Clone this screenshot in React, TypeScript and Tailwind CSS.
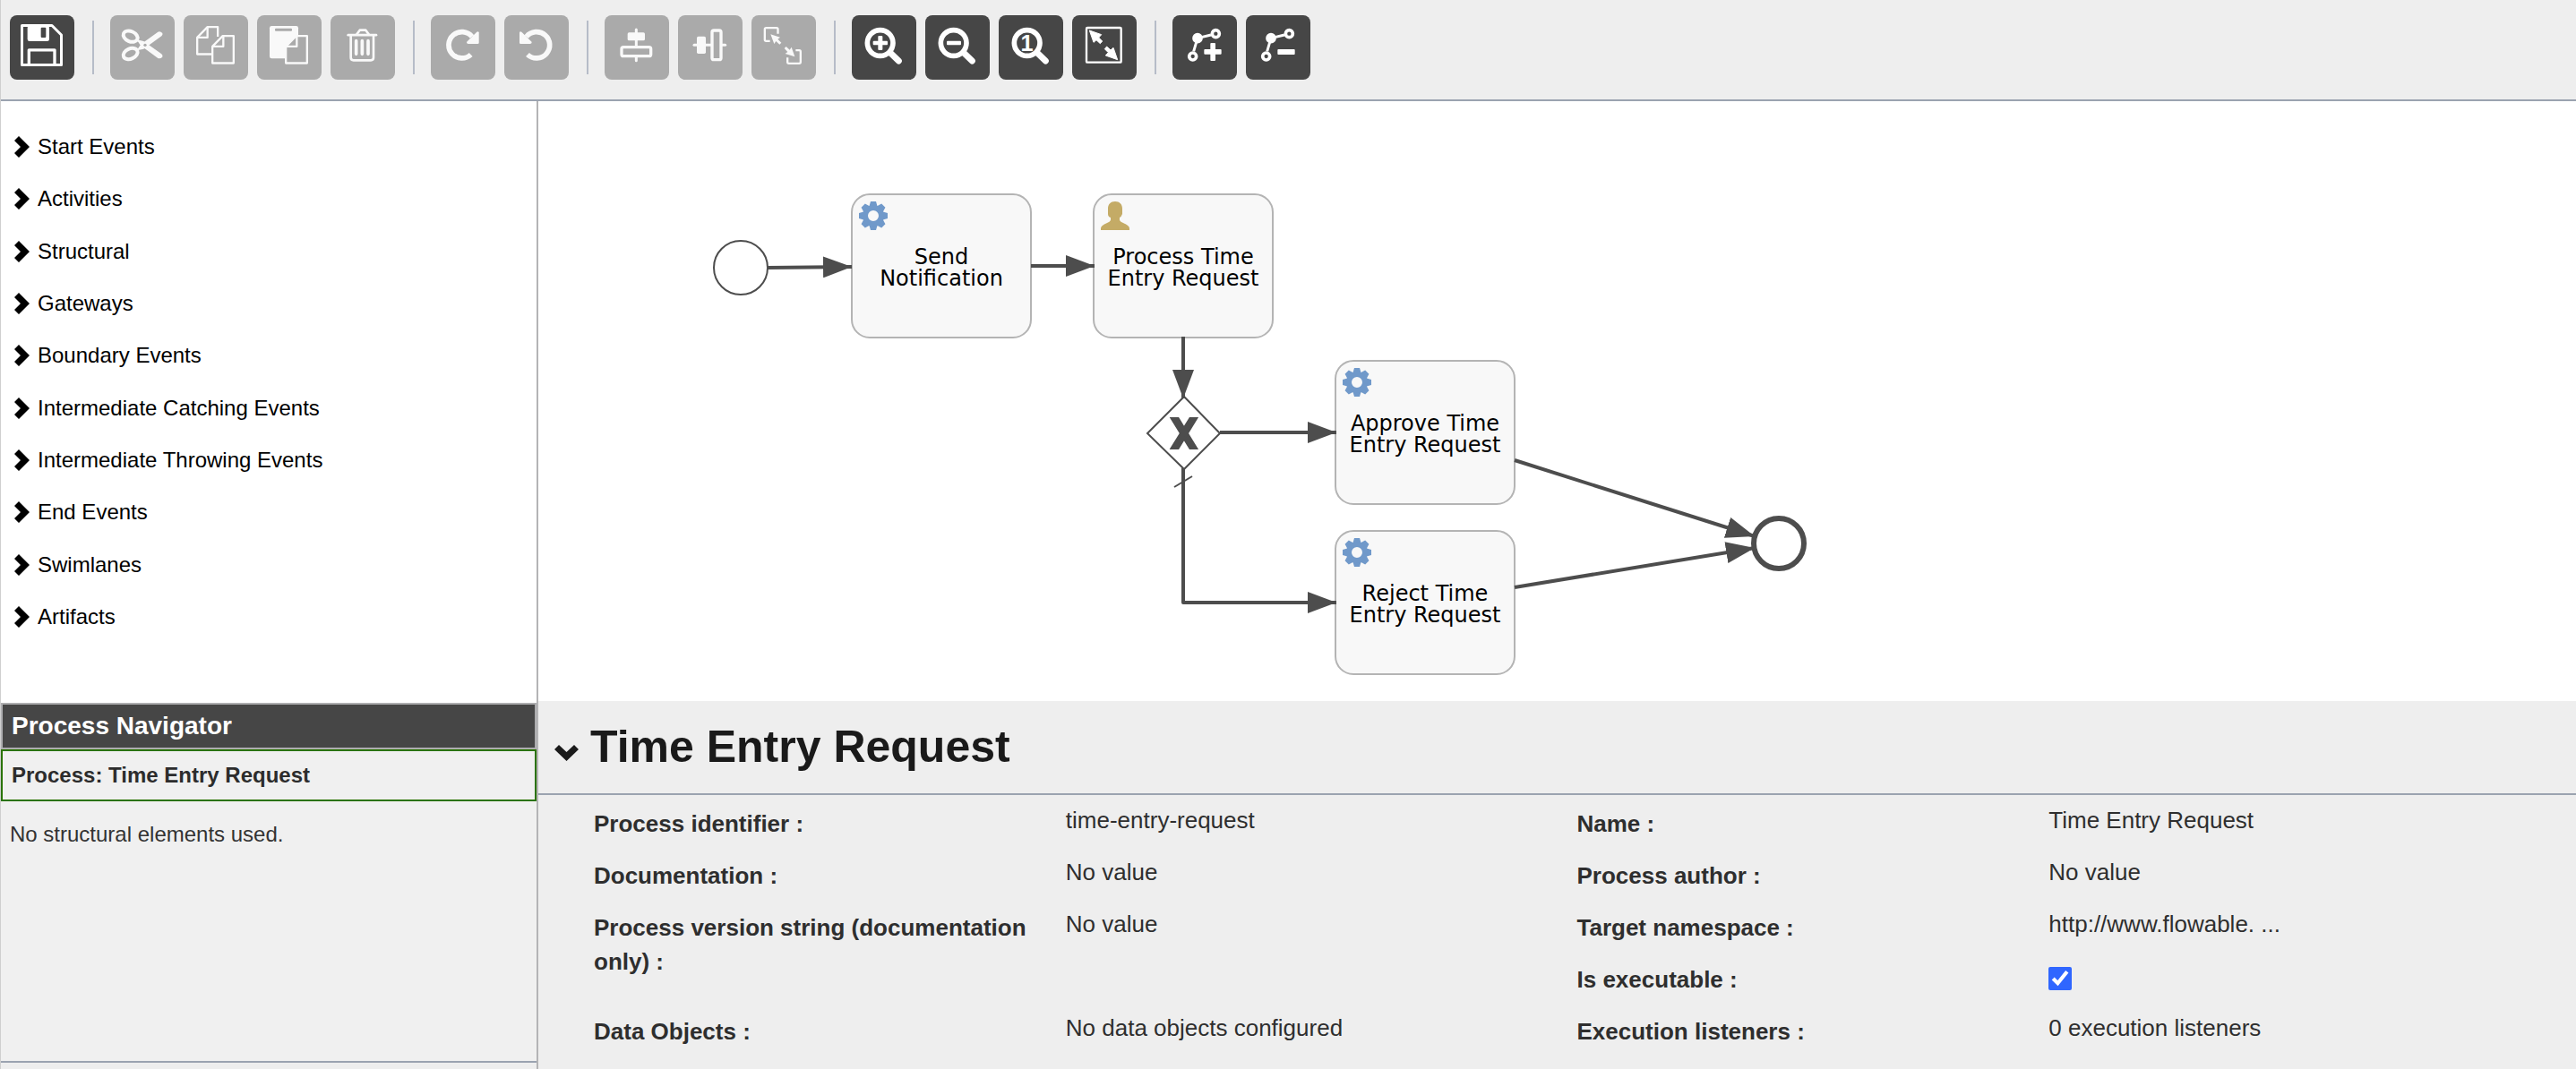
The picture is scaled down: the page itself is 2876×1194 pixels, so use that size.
import type { ReactNode } from "react";

const DARK = "#464646";
const GREY = "#aaaaaa";
const INK = "#4d4d4d";

/* ---------- toolbar icons, drawn on a 216 unit grid ---------- */

const DOC = "M96.5 104.5 L131 69.5 H167.5 V160.5 H96.5 Z";

const ARROW = "M58 51 L98 65 L89 75 L101 87 L94 95 L81 83 L72 91 Z";

function Scissors() {
  return (
    <>
      <g fill="none" stroke="currentColor" strokeWidth="12">
        <ellipse cx="68" cy="71" rx="25" ry="17" transform="rotate(24 68 71)" />
        <ellipse cx="68" cy="129" rx="25" ry="17" transform="rotate(-24 68 129)" />
      </g>
      <path d="M90 84 L112 91 L160 56 Q168 53 175 60 Q177 66 172 70 L112 113 L90 118 L102 101 Z" />
      <path d="M90 116 L112 109 L160 144 Q168 147 175 140 Q177 134 172 130 L112 87 L90 82 L102 99 Z" />
      <circle cx="117" cy="100" r="5" fill={GREY} />
    </>
  );
}

function Turn() {
  return (
    <>
      <path d="M138 72 A44 44 0 1 0 134 132" fill="none" stroke="currentColor" strokeWidth="17" />
      <path d="M161 58 V92 Q161 96 157 96 H125 Q117 94 122 88 L154 56 Q159 52 161 58 Z" />
    </>
  );
}

function Lens({ children }: { children: ReactNode }) {
  return (
    <>
      <circle cx="95" cy="93" r="43" fill="none" stroke="currentColor" strokeWidth="17" />
      <path d="M129 126 L157 153" stroke="currentColor" strokeWidth="21" strokeLinecap="round" />
      {children}
    </>
  );
}

function Bend() {
  return (
    <g stroke="currentColor" strokeWidth="11" fill="none">
      <path d="M129 66 L84 77 L71 121" strokeWidth="9" />
      <circle cx="84" cy="77" r="12" fill="currentColor" />
      <circle cx="145" cy="62" r="12" />
      <circle cx="68" cy="138" r="12" />
    </g>
  );
}

type Tool = { label: string; dark?: boolean; icon: ReactNode };

const toolGroups: Tool[][] = [
  [
    {
      label: "Save",
      dark: true,
      icon: (
        <>
          <path d="M40.5 34.5 H141 L172.5 66 V166.5 H40.5 Z" fill="none" stroke="currentColor" strokeWidth="9" strokeLinejoin="round" />
          <rect x="59" y="35" width="73" height="52" rx="7" />
          <rect x="104" y="41" width="17" height="34" rx="3" fill={DARK} />
          <path d="M64 166 V116.5 H150 V166" fill="none" stroke="currentColor" strokeWidth="10" strokeLinejoin="round" />
        </>
      ),
    },
  ],
  [
    { label: "Cut", icon: <Scissors /> },
    {
      label: "Copy",
      icon: (
        <g fill="none" stroke="currentColor" strokeWidth="7" strokeLinejoin="round">
          <path d="M96 130.5 H45.5 V74.5 L80 39.5 H114.5 V72" />
          <path d="M45.5 74.5 H80 V39.5" />
          <path d={DOC} />
          <path d="M96.5 104.5 H133 V69.5" />
        </g>
      ),
    },
    {
      label: "Paste",
      icon: (
        <>
          <rect x="42" y="36" width="96" height="109" rx="7" />
          <rect x="60" y="44" width="57" height="9" rx="3" fill={GREY} />
          <g stroke="currentColor" strokeWidth="7" strokeLinejoin="round" fill={GREY}>
            <path d={DOC} />
            <path d="M96.5 104.5 H133 V69.5" fill="none" />
          </g>
        </>
      ),
    },
    {
      label: "Delete",
      icon: (
        <g fill="none" stroke="currentColor" strokeWidth="8" strokeLinecap="round" strokeLinejoin="round">
          <path d="M59 66.5 H153" />
          <path d="M88 64 L98 50 H118 L128 64" />
          <path d="M68 70 V142 Q68 151 77 151 H135 Q144 151 144 142 V70" />
          <path d="M86 86 V130 M106 86 V130 M126 86 V130" strokeWidth="11" />
        </g>
      ),
    },
  ],
  [
    { label: "Redo", icon: <Turn /> },
    {
      label: "Undo",
      icon: (
        <g transform="translate(212 0) scale(-1 1)">
          <Turn />
        </g>
      ),
    },
  ],
  [
    {
      label: "Align vertical",
      icon: (
        <>
          <path d="M106 48 V152" stroke="currentColor" strokeWidth="9" strokeLinecap="round" />
          <rect x="77" y="58" width="58" height="27" rx="5" />
          <rect x="57" y="107" width="98" height="30" rx="6" fill={GREY} stroke="currentColor" strokeWidth="10" />
        </>
      ),
    },
    {
      label: "Align horizontal",
      icon: (
        <>
          <path d="M54 100 H158" stroke="currentColor" strokeWidth="9" strokeLinecap="round" />
          <rect x="63" y="71" width="30" height="58" rx="5" />
          <rect x="114" y="51" width="30" height="98" rx="6" fill={GREY} stroke="currentColor" strokeWidth="10" />
        </>
      ),
    },
    {
      label: "Same size",
      icon: (
        <>
          <g fill="none" stroke="currentColor" strokeWidth="7">
            <path d="M62 86.5 H49 Q44.5 86.5 44.5 82 V47 Q44.5 42.5 49 42.5 H84 Q88.5 42.5 88.5 47 V62" />
            <path d="M148 117.5 H160 Q164.5 117.5 164.5 122 V157 Q164.5 161.5 160 161.5 H125 Q120.5 161.5 120.5 157 V142" />
          </g>
          <path d="M64 64 L96 74 L88 80 L100 92 L94 98 L82 87 L76 96 Z" />
          <path d="M145 139 L113 129 L121 123 L110 111 L116 105 L128 116 L134 107 Z" />
        </>
      ),
    },
  ],
  [
    {
      label: "Zoom in",
      dark: true,
      icon: (
        <Lens>
          <rect x="71" y="86" width="49" height="14" rx="3" />
          <rect x="88" y="69" width="15" height="48" rx="3" />
        </Lens>
      ),
    },
    {
      label: "Zoom out",
      dark: true,
      icon: (
        <Lens>
          <rect x="72" y="86" width="48" height="14" rx="3" />
        </Lens>
      ),
    },
    {
      label: "Zoom to actual size",
      dark: true,
      icon: (
        <Lens>
          <text x="95" y="120" textAnchor="middle" fontSize="76" fontWeight="700">
            1
          </text>
        </Lens>
      ),
    },
    {
      label: "Zoom to fit",
      dark: true,
      icon: (
        <>
          <rect x="48" y="42" width="116" height="116" rx="3" fill="none" stroke="currentColor" strokeWidth="7" />
          <path d={ARROW} strokeLinejoin="round" stroke="currentColor" strokeWidth="3" />
          <path d={ARROW} transform="rotate(180 105 100)" strokeLinejoin="round" stroke="currentColor" strokeWidth="3" />
        </>
      ),
    },
  ],
  [
    {
      label: "Add bend point",
      dark: true,
      icon: (
        <>
          <Bend />
          <rect x="106" y="114" width="58" height="17" rx="3" />
          <rect x="127" y="93" width="17" height="60" rx="3" />
        </>
      ),
    },
    {
      label: "Remove bend point",
      dark: true,
      icon: (
        <>
          <Bend />
          <rect x="106" y="114" width="58" height="18" rx="3" />
        </>
      ),
    },
  ],
];

function Toolbar() {
  return (
    <header className="flex items-center border-b-2 border-[#9ba3b0] bg-[#eeeeee] pt-[17px] pb-[22px] pl-[10px]">
      {toolGroups.map((group, i) => (
        <div key={i} className="flex items-center">
          {i > 0 && <div className="mr-[18px] ml-5 h-[60px] w-0.5 bg-[#b6bcc8]" />}
          <div className="flex gap-[10px]">
            {group.map((tool) => (
              <button
                key={tool.label}
                type="button"
                aria-label={tool.label}
                disabled={!tool.dark}
                className={
                  tool.dark
                    ? "size-[72px] rounded-lg bg-[#464646] text-white"
                    : "size-[72px] rounded-lg bg-[#aaaaaa] text-[#f9f9f9]"
                }
              >
                <svg viewBox="0 0 216 216" className="size-full" fill="currentColor" aria-hidden="true">
                  {tool.icon}
                </svg>
              </button>
            ))}
          </div>
        </div>
      ))}
    </header>
  );
}

/* ---------- sidebar ---------- */

const palette = [
  "Start Events",
  "Activities",
  "Structural",
  "Gateways",
  "Boundary Events",
  "Intermediate Catching Events",
  "Intermediate Throwing Events",
  "End Events",
  "Swimlanes",
  "Artifacts",
];

function Sidebar() {
  return (
    <aside className="flex w-[600px] shrink-0 flex-col border-r-2 border-[#b4b4b6] bg-[#f0f0f0]">
      <nav className="h-[672px] bg-white pt-[22px]">
        <ul className="grid h-[583px] auto-rows-fr">
          {palette.map((name) => (
            <li key={name} className="flex">
              <button type="button" className="flex items-center gap-[9px] pl-[15px] text-[24px] text-black">
                <svg viewBox="0 0 17 24" className="h-6 w-[17px]" aria-hidden="true">
                  <path d="M5 0 L17 12 L5 24 L0 19 L7 12 L0 5 Z" />
                </svg>
                {name}
              </button>
            </li>
          ))}
        </ul>
      </nav>
      <h2 className="border-2 border-[#adadaf] bg-[#464646] px-[10px] text-[28px] leading-[48px] font-bold text-white">
        Process Navigator
      </h2>
      <button
        type="button"
        className="border-2 border-[#2a7300] px-[10px] text-left text-[24px] leading-[54px] font-bold text-[#2c2c2c]"
      >
        Process: Time Entry Request
      </button>
      <p className="flex-1 px-[10px] pt-[18px] text-[24px] leading-[38px] text-[#333333]">
        No structural elements used.
      </p>
      <div className="h-[9px] border-t-2 border-[#9ba3b0] bg-[#eeeeee]" />
    </aside>
  );
}

/* ---------- diagram ---------- */

const GEAR_TEETH = [0, 45, 90, 135, 180, 225, 270, 315];

function Gear() {
  return (
    <g fill="#7099ca">
      {GEAR_TEETH.map((angle) => (
        <path key={angle} d="M11 7 L13 0 H19 L21 7 Z" transform={`rotate(${angle} 16 16)`} />
      ))}
      <circle cx="16" cy="16" r="9" fill="none" stroke="#7099ca" strokeWidth="6" />
    </g>
  );
}

function Person() {
  return (
    <path
      fill="#c4ab66"
      d="M16 0 C21 0 24 3 24 8 V14 Q23 17 21 18 V21 Q22 23 25 24 Q32 27 32 30 V32 H0 V30 Q0 27 7 24 Q10 23 11 21 V18 Q8 17 8 14 V8 C8 3 11 0 16 0 Z"
    />
  );
}

function Task({ x, y, lines, user }: { x: number; y: number; lines: string[]; user?: boolean }) {
  return (
    <g transform={`translate(${x} ${y})`}>
      <rect x="1" y="1" width="200" height="160" rx="20" fill="#f8f8f8" stroke="#b4b4b4" strokeWidth="2" />
      <g transform="translate(9 9)">{user ? <Person /> : <Gear />}</g>
      <text textAnchor="middle" fontSize="24" fill="#000000">
        {lines.map((line, i) => (
          <tspan key={line} x="101" y={79 + i * 24}>
            {line}
          </tspan>
        ))}
      </text>
    </g>
  );
}

function Diagram() {
  return (
    <div className="h-[670px] overflow-hidden bg-white">
      <svg
        viewBox="601 113 1475 670"
        className="h-[670px] w-[1475px] font-['Verdana','DejaVu_Sans',sans-serif]"
        role="img"
        aria-label="Time Entry Request process"
      >
        <defs>
          <marker id="head" markerUnits="userSpaceOnUse" markerWidth="32" markerHeight="24" refX="32" refY="12" orient="auto">
            <path d="M0 0 L32 12 L0 24 Z" fill={INK} />
          </marker>
        </defs>
        <Task x={950} y={216} lines={["Send", "Notification"]} />
        <Task x={1220} y={216} lines={["Process Time", "Entry Request"]} user />
        <Task x={1490} y={402} lines={["Approve Time", "Entry Request"]} />
        <Task x={1490} y={592} lines={["Reject Time", "Entry Request"]} />
        <path d="M1322 443 L1362 484 L1322 524 L1281 484 Z" fill="#ffffff" stroke={INK} strokeWidth="2" />
        <g fill={INK} stroke={INK} transform="translate(1290 452) scale(2)">
          <path d="M8.750 7.550 L12.750 7.550 L23.150 24.450 L19.250 24.450 Z" />
          <path d="M8.750 24.450 L19.250 7.550 L23.150 7.550 L12.750 24.450 Z" />
        </g>
        <g fill="none" stroke={INK} strokeWidth="4" strokeLinejoin="round">
          <path d="M857 299 L951 298" markerEnd="url(#head)" />
          <path d="M1151 297 H1222" markerEnd="url(#head)" />
          <path d="M1321 376 V445" markerEnd="url(#head)" />
          <path d="M1362 483 H1492" markerEnd="url(#head)" />
          <path d="M1321 523 V673 H1492" markerEnd="url(#head)" />
          <path d="M1691 514 L1959 599" markerEnd="url(#head)" />
          <path d="M1691 656 L1959 612" markerEnd="url(#head)" />
          <path d="M1311 544 L1331 532" strokeWidth="2" />
        </g>
        <circle cx="827" cy="299" r="30" fill="#ffffff" stroke={INK} strokeWidth="2" />
        <circle cx="1986" cy="607" r="28" fill="#ffffff" stroke={INK} strokeWidth="6" />
      </svg>
    </div>
  );
}

/* ---------- properties ---------- */

type Property = { label: string; value?: string; place: string };

const properties: Property[] = [
  { label: "Process identifier :", value: "time-entry-request", place: "col-start-1 row-start-1" },
  { label: "Name :", value: "Time Entry Request", place: "col-start-2 row-start-1" },
  { label: "Documentation :", value: "No value", place: "col-start-1 row-start-2" },
  { label: "Process author :", value: "No value", place: "col-start-2 row-start-2" },
  {
    label: "Process version string (documentation only) :",
    value: "No value",
    place: "col-start-1 row-start-3 row-span-2",
  },
  { label: "Target namespace :", value: "http://www.flowable. ...", place: "col-start-2 row-start-3" },
  { label: "Is executable :", place: "col-start-2 row-start-4" },
  { label: "Data Objects :", value: "No data objects configured", place: "col-start-1 row-start-5" },
  { label: "Execution listeners :", value: "0 execution listeners", place: "col-start-2 row-start-5" },
];

function Properties() {
  return (
    <section className="flex-1 bg-[#eeeeee] text-[#2e2e2e]">
      <div className="border-b-2 border-[#9ba3b0]">
        <h1>
          <button
            type="button"
            className="flex h-[103px] items-center gap-[13px] pl-[18px] text-[50px] font-bold text-[#1a1a1a]"
          >
            <svg viewBox="0 0 27 18" className="mt-3 h-[18px] w-[27px]" fill="currentColor" aria-hidden="true">
              <path d="M5 0 L13.500 8 L22 0 L27 5 L13.500 18 L0 5 Z" />
            </svg>
            Time Entry Request
          </button>
        </h1>
      </div>
      <div className="grid auto-rows-[58px] grid-cols-2 pt-[9px] pr-[18px] pl-[62px] text-[26px] leading-[38px]">
        {properties.map((p) => (
          <div key={p.label} className={`flex ${p.place}`}>
            {p.value ? (
              <>
                <span className="w-[48%] pt-1 pr-10 font-bold">{p.label}</span>
                <span>{p.value}</span>
              </>
            ) : (
              <>
                <label htmlFor="executable" className="w-[48%] pt-1 font-bold">
                  {p.label}
                </label>
                <input id="executable" type="checkbox" defaultChecked className="mt-[9px] size-[26px] accent-[#2f66ff]" />
              </>
            )}
          </div>
        ))}
      </div>
    </section>
  );
}

export default function App() {
  return (
    <div className="flex min-h-screen flex-col border-l border-[#cfcfcf] bg-white font-['Liberation_Sans',Arial,sans-serif]">
      <Toolbar />
      <div className="flex flex-1">
        <Sidebar />
        <main className="flex min-w-0 flex-1 flex-col">
          <Diagram />
          <Properties />
        </main>
      </div>
    </div>
  );
}
